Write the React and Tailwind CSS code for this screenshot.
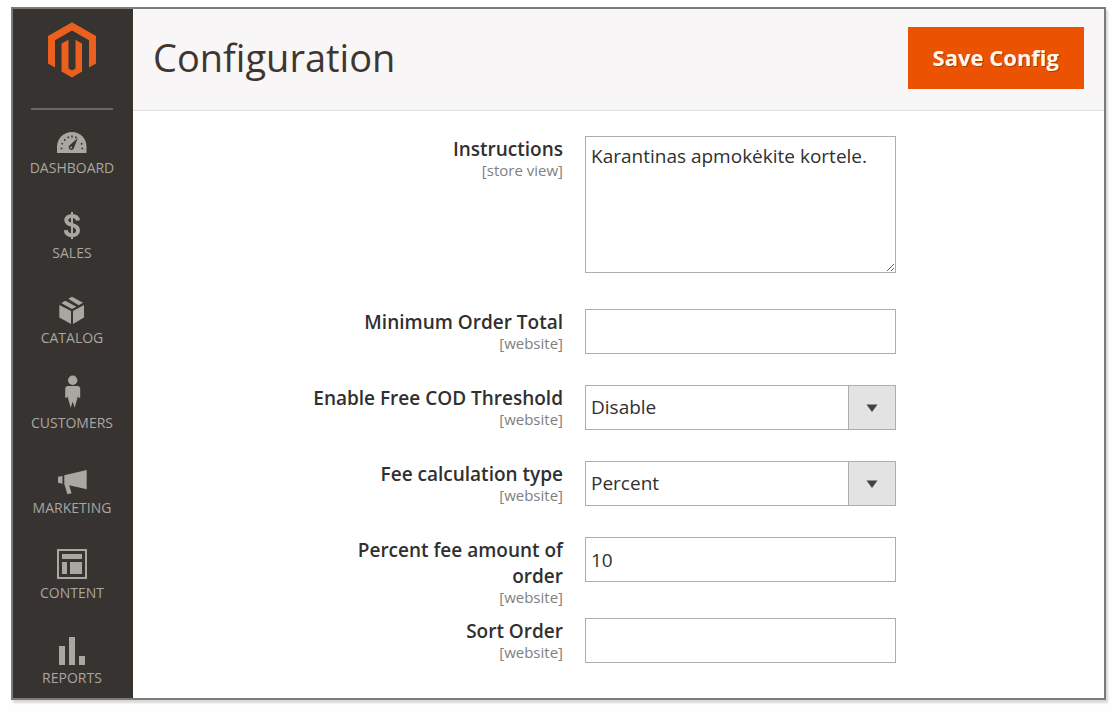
import React, { useState } from 'react';

function MagentoLogo() {
    return (
        <svg width="50" height="56" viewBox="48 22 50 56" fill="#eb5f1f" aria-hidden="true">
            <path d="M73 22.3 97 36V63.6L90 67.6V40.2L73 30.6 56 40.2V67.6L49 63.6V36Z" />
            <path d="M62.5 43.6 69.5 39.8V68.4L73 70.6 76.5 68.4V39.8L83 43.6V71.4L73 77.4 62.5 71.4Z" />
        </svg>
    );
}

// Every menu icon is drawn on the same 34x34 grid
const icons = {
    dashboard: (
        <>
            <path d="M2 32V25.8C2 17.6 8.7 11 17 11S31.5 17.6 31.5 25.8V32Z" />
            <path
                d="M5.6 27.4H7.4M6.4 22.4 8 23.2M9.2 18.4 10.4 19.6M13 15.6 13.6 17.2M17 14.6V16.4M21.2 15.4 20.6 17.2M28.2 27.4H26.4M27.5 22.4 25.8 23.2"
                stroke="#373330"
                strokeWidth="1.5"
                fill="none"
            />
            <path d="M22.8 17 18.8 27.3A2.6 2.6 0 1 1 14.4 24.6Z" fill="#373330" />
            <circle cx="16.2" cy="26.6" r="1" />
        </>
    ),
    sales: (
        <>
            <path
                d="M23 14.6C22.6 11.6 20.4 9.9 17 9.9S11.3 11.6 11.3 14.2C11.3 16.9 13.4 18 17 18.9S23 21.4 23 24.4C23 27.4 20.6 29.3 17.1 29.3 13.4 29.3 11 27.4 10.8 24.2"
                stroke="currentColor"
                strokeWidth="4"
                fill="none"
            />
            <path d="M16 6H18V33H16Z" />
        </>
    ),
    catalog: (
        <>
            <path d="M4.3 14 16 20V33L4.3 26.5Z" />
            <path d="M18 20 29 14V26.5L18 33Z" />
            <path d="M6.3 12 10.3 9.7 21.3 15.7 17 18Z" />
            <path d="M13.3 7.7 17 5.7 28 11.7 23.7 14.3Z" />
        </>
    ),
    customers: (
        <>
            <circle cx="17.7" cy="4.2" r="4.7" />
            <path d="M13 10H22.4C24.2 10 25.2 11.2 25.2 13V21.7H23.4L23 20 19.7 31.7 17.7 25.7 15.7 31.7 12.4 20 12 21.7H10.2V13C10.2 11.2 11.2 10 13 10Z" />
        </>
    ),
    marketing: (
        <>
            <path d="M9.3 14.3 31.7 9V28.3L14.2 24.2 16.6 32.2 12.4 33.3 9.3 23Z" />
            <path d="M3 15.7 7.5 15V22.7L3 21.7Z" />
        </>
    ),
    content: (
        <>
            <path d="M3 4H31V32H3Z" fill="none" stroke="currentColor" strokeWidth="2" />
            <path d="M7 8H27V13H7Z" />
            <path d="M7 16H12V28H7Z" />
            <path d="M15 16H27V28H15Z" />
        </>
    ),
    reports: (
        <>
            <path d="M4 15H10V34H4Z" />
            <path d="M14 6H20V34H14Z" />
            <path d="M24 25H30V34H24Z" />
        </>
    )
};

const menu = [
    { icon: 'dashboard', label: 'DASHBOARD' },
    { icon: 'sales', label: 'SALES' },
    { icon: 'catalog', label: 'CATALOG' },
    { icon: 'customers', label: 'CUSTOMERS' },
    { icon: 'marketing', label: 'MARKETING' },
    { icon: 'content', label: 'CONTENT' },
    { icon: 'reports', label: 'REPORTS' }
];

function Sidebar() {
    return (
        <aside className="w-[120px] shrink-0 bg-[#373330] pt-[13px] pr-[2px] pb-[10px]">
            <div className="mx-auto flex w-[82px] justify-center border-b-2 border-[#6b6764] pb-[30px]">
                <a href="#home" aria-label="Magento">
                    <MagentoLogo />
                </a>
            </div>
            <nav>
                <ul className="flex flex-col gap-7 pt-[11px]">
                    {menu.map((item) => (
                        <li key={item.icon}>
                            <a href={`#${item.icon}`} className="flex flex-col items-center gap-[3px] text-[#aaa6a0]">
                                <svg width="34" height="34" viewBox="0 0 34 34" fill="currentColor" className="overflow-visible" aria-hidden="true">
                                    {icons[item.icon]}
                                </svg>
                                <span className="text-sm">{item.label}</span>
                            </a>
                        </li>
                    ))}
                </ul>
            </nav>
        </aside>
    );
}

const controlClass = 'block w-full border border-[#adadad] bg-white px-[5px] text-[19px] text-[#303030]';

function Row({ id, label, scope, children }) {
    return (
        <div className="grid grid-cols-[430px_1fr] items-start gap-[22px]">
            <label htmlFor={id} className="block max-w-[260px] justify-self-end pb-[13px] text-right">
                <span className="block text-[19px] leading-[26px] font-semibold text-[#303030]">{label}</span>
                <span className="block text-[15px] leading-4 text-[#808080]">[{scope}]</span>
            </label>
            <div className="w-3/5 pb-[31px]">{children}</div>
        </div>
    );
}

function TextInput({ id, value, onChange }) {
    return <input id={id} name={id} type="text" value={value} onChange={onChange} className={`${controlClass} h-[45px]`} />;
}

function Select({ id, value, onChange, options }) {
    return (
        <div className="relative">
            <select id={id} name={id} value={value} onChange={onChange} className={`${controlClass} h-[45px] appearance-none`}>
                {options.map((option) => (
                    <option key={option}>{option}</option>
                ))}
            </select>
            <span className="pointer-events-none absolute inset-y-0 right-0 flex w-12 items-center justify-center border border-[#adadad] bg-[#e3e3e3]">
                <svg width="12" height="8" viewBox="0 0 12 8" fill="#454341" aria-hidden="true">
                    <path d="M0.5 0.5H11.5L6 8Z" />
                </svg>
            </span>
        </div>
    );
}

function App() {
    const [config, setConfig] = useState({
        instructions: 'Karantinas apmokėkite kortele.',
        minOrderTotal: '',
        freeThreshold: 'Disable',
        feeType: 'Percent',
        feeAmount: '10',
        sortOrder: ''
    });

    const handleChange = (e) => {
        const { name, value } = e.target;
        setConfig({
            ...config,
            [name]: value
        });
    };

    return (
        <div className="bg-[#fefefe] pt-[7px] pr-[14px] pb-4 pl-[11px] font-['Open_Sans',sans-serif]">
            <div className="flex border-2 border-[#7c7b79] bg-white shadow-[2px_3px_2px_#d8d8d6]">
                <Sidebar />
                <main className="min-w-0 flex-1">
                    <header className="flex items-start justify-between border-b border-[#dbe0df] bg-[#f8f6f7] px-5 pt-[18px] pb-[21px]">
                        <h1 className="text-[38px] leading-[60px] text-[#41362f]">Configuration</h1>
                        <button
                            type="button"
                            className="h-[62px] bg-[#eb5202] px-[25px] pb-[2px] text-[22px] font-bold text-[#fff7ea] text-shadow-[1px_1px_0_rgba(0,0,0,0.3)]"
                        >
                            Save Config
                        </button>
                    </header>

                    <form className="pt-[25px]">
                        <Row id="instructions" label="Instructions" scope="store view">
                            <textarea
                                id="instructions"
                                name="instructions"
                                value={config.instructions}
                                onChange={handleChange}
                                className={`${controlClass} mb-[5px] h-[137px] py-[6px] leading-[26px]`}
                            />
                        </Row>
                        <Row id="minOrderTotal" label="Minimum Order Total" scope="website">
                            <TextInput id="minOrderTotal" value={config.minOrderTotal} onChange={handleChange} />
                        </Row>
                        <Row id="freeThreshold" label="Enable Free COD Threshold" scope="website">
                            <Select id="freeThreshold" value={config.freeThreshold} onChange={handleChange} options={['Disable', 'Enable']} />
                        </Row>
                        <Row id="feeType" label="Fee calculation type" scope="website">
                            <Select id="feeType" value={config.feeType} onChange={handleChange} options={['Percent', 'Fixed']} />
                        </Row>
                        <Row id="feeAmount" label="Percent fee amount of order" scope="website">
                            <TextInput id="feeAmount" value={config.feeAmount} onChange={handleChange} />
                        </Row>
                        <Row id="sortOrder" label="Sort Order" scope="website">
                            <TextInput id="sortOrder" value={config.sortOrder} onChange={handleChange} />
                        </Row>
                    </form>
                </main>
            </div>
        </div>
    );
}

export default App;
